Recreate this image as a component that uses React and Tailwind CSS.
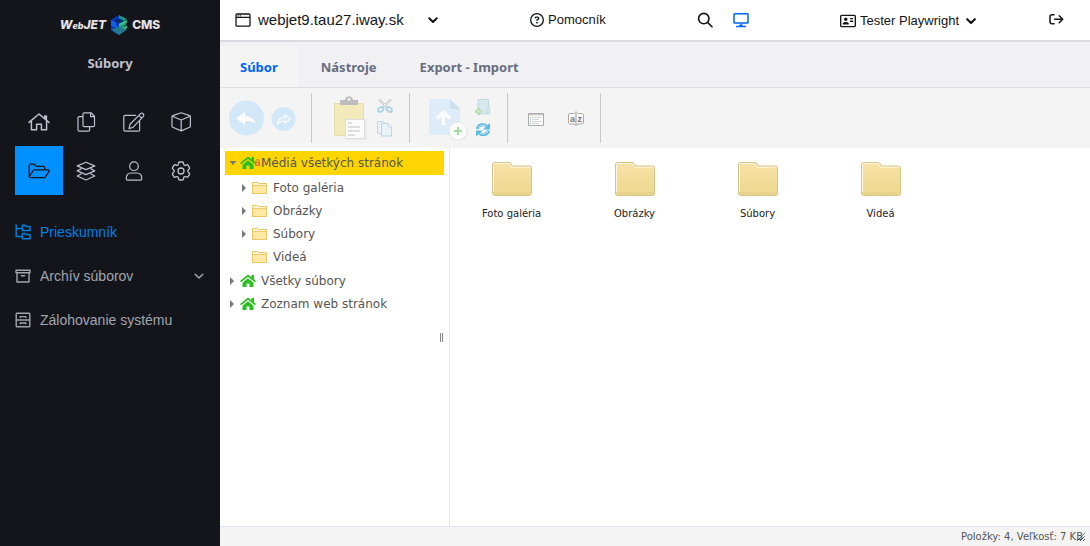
import React from "react";
import { FaRegCircleQuestion, FaRegAddressCard } from "react-icons/fa6";
import { HiOutlineCog6Tooth } from "react-icons/hi2";

function Line({ children, className = "", size = 24, width = 1.2 }) {
  return (
    <svg
      aria-hidden="true"
      className={"shrink-0 " + className}
      width={size}
      height={size}
      viewBox={`0 0 ${size} ${size}`}
      fill="none"
      stroke="currentColor"
      strokeWidth={width}
      strokeLinecap="round"
      strokeLinejoin="round"
    >
      {children}
    </svg>
  );
}

const sections = [
  {
    label: "Úvod",
    icon: (
      <Line width={1.5}>
        <path d="M2 12.4 12 4l10 8.4M4.4 11v8.8h5.2v-5.6h4.8v5.6h5.2V11M17.8 8.6V6h1.6v4" />
      </Line>
    ),
  },
  {
    label: "Web stránky",
    icon: (
      <Line>
        <path d="M17 2.8h-6.8c-.8 0-1.2.5-1.2 1.2v11.4c0 .8.4 1.2 1.2 1.2h9.1c.7 0 1.2-.4 1.2-1.2V6.2zM16.6 3v3.6h3.7M8.800 6.600H5.200C4.400 6.600 4 7 4 7.800V20c0 .8.4 1.200 1.200 1.200h9.200c.8 0 1.200-.4 1.200-1.200v-3.200" />
      </Line>
    ),
  },
  {
    label: "Šablóny",
    icon: (
      <Line>
        <path d="M13.6 5.4H3c-.8 0-1.2.4-1.2 1.2V20c0 .8.4 1.2 1.2 1.2h13.4c.8 0 1.2-.4 1.2-1.2v-8.6M7 18.6l1.2-4.6L18.6 3.6c1.6-1.4 4.2 1 2.8 2.8L11.2 17.2zM16.8 5.4l2.8 2.8" />
      </Line>
    ),
  },
  {
    label: "Aplikácie",
    icon: (
      <Line>
        <path d="M12.2 2.8 3.8 5.6c-.5.2-.8.5-.8 1v9.6c0 .5.3.9.8 1.1l8.4 3.6 8.4-3.6c.5-.2.8-.6.8-1.1V6.6c0-.5-.3-.8-.8-1zM3.3 6.2l8.9 3.8 8.9-3.8M12.2 10v10.8" />
      </Line>
    ),
  },
  {
    label: "Súbory",
    active: true,
    icon: (
      <Line width={1.3}>
        <path d="M2.2 17.6V6.4c0-.8.4-1.2 1.2-1.2h3.8l2.6 2.2h6.6c.8 0 1.2.4 1.2 1.2v2.2M2.2 17.6l4-6c.4-.5.7-.7 1.3-.7h13.8c.8 0 1.2.5.8 1.2l-3.400 5.500c-.4.7-.8 1-1.500 1H3.200c-.6 0-1-.4-1-1z" />
      </Line>
    ),
  },
  {
    label: "Formuláre",
    icon: (
      <Line>
        <path d="M12 3.200 3.200 6.900 12 10.600l8.800-3.700zM7 9.900l-3.800 2L12 15.600l8.800-3.700-3.800-2M7 15l-3.800 2 8.800 4 8.800-4-3.800-2" />
      </Line>
    ),
  },
  {
    label: "Používatelia",
    icon: (
      <Line>
        <circle cx="12" cy="7.200" r="4.300" />
        <path d="M4.200 19.800c0-3.900 2-5.800 5-5.800h5.600c3 0 5 1.900 5 5.800 0 .9-.5 1.400-1.300 1.400h-13c-.8 0-1.300-.5-1.300-1.400z" />
      </Line>
    ),
  },
  {
    label: "Nastavenia",
    icon: <HiOutlineCog6Tooth className="size-6 [stroke-width:1.3]" aria-hidden="true" />,
  },
];

const menu = [
  {
    label: "Prieskumník",
    active: true,
    icon: (
      <Line size={16} width={1.5}>
        <path d="M1.200 1v11.400h5.600M1.200 4.400h6M7.400 1.200h2.600l1 1.200h4v4.200H7.400zM7.400 9.400h2.600l1 1.200h4v4.200H7.400z" />
      </Line>
    ),
  },
  {
    label: "Archív súborov",
    expandable: true,
    icon: (
      <Line size={16} width={1.4}>
        <path d="M1 2.200h14v2.600H1zM2 5v9h12V5M6.400 7.800h3.200" />
      </Line>
    ),
  },
  {
    label: "Zálohovanie systému",
    icon: (
      <Line size={16} width={1.4}>
        <path d="M2 1.200h12c.5 0 .8.300.8.800v12c0 .5-.3.800-.8.800H2c-.5 0-.8-.3-.8-.8V2c0-.5.300-.8.800-.8zM1.400 8h13.200M5.200 5.400V4.600h5.600v.8M5.200 11.800V11h5.600v.8" />
      </Line>
    ),
  },
];

function Chevron({ className = "", width = 2 }) {
  return (
    <Line size={12} width={width} className={className}>
      <path d="m2.200 4.200 3.800 3.800 3.800-3.800" />
    </Line>
  );
}

function Logo() {
  return (
    <a
      href="#home"
      aria-label="WebJET CMS"
      className="flex h-5 items-center justify-center gap-1 font-['Inter',sans-serif] text-xs leading-5 text-[#e4e4e6]"
    >
      <span className="font-extrabold italic">
        W<span className="text-[9px]">eb</span>JET
      </span>
      <svg width="18" height="20" viewBox="0 0 18 20" aria-hidden="true">
        <path d="M9 0 1 4.500v11L9 20z" fill="#0836b8" />
        <path d="m9 0 8 4-3 2.500L17 9l-3 2.500 3 2.500-8 6z" fill="#1c9678" />
        <path d="m1 5 8 3.500L14 6 9 3.500 4 6z" fill="#052a75" />
        <path d="m1 5 5 2.400v3L9 12v2l-8-3.500z" fill="#0b62f0" />
        <path d="m9 9 8-4v2.500l-8 4zM9 14.500l8-4V13l-8 4z" fill="#35c08d" />
        <path d="m1 14.500 8-3 8 3L9 20z" fill="#20798c" />
      </svg>
      <span className="font-extrabold">CMS</span>
    </a>
  );
}

function Sidebar() {
  return (
    <aside className="w-[220px] shrink-0 bg-[#13151b] px-[15px] pt-[15px] text-[#bfc1cf]">
      <Logo />
      <h1 className="mt-4 text-center font-['Noto_Sans',sans-serif] text-[13px] leading-6 font-bold">
        Súbory
      </h1>
      <nav aria-label="Sekcie" className="mt-[22px] grid grid-cols-4">
        {sections.map((s) => (
          <a
            key={s.label}
            href="#section"
            aria-label={s.label}
            className={
              "flex h-[49px] items-center justify-center " +
              (s.active ? "bg-[#0090ff] text-[#13151b]" : "")
            }
          >
            {s.icon}
          </a>
        ))}
      </nav>
      <nav aria-label="Menu" className="mt-[15px] text-sm">
        {menu.map((m) => (
          <a
            key={m.label}
            href="#menu"
            className={
              "flex h-11 items-center gap-[9px] " +
              (m.active ? "text-[#0080e0]" : "text-[#a3a5ae]")
            }
          >
            {m.icon}
            <span className="grow">{m.label}</span>
            {m.expandable && <Chevron width={1.5} />}
          </a>
        ))}
      </nav>
    </aside>
  );
}

function Header() {
  return (
    <header className="flex h-[42px] items-center border-b-2 border-[#dcdce2] bg-white pr-[26px] pl-[15px] text-[#13151b]">
      <Line size={16} width={1.3}>
        <path d="M2 2h12c.6 0 1 .4 1 1v10.200c0 .6-.4 1-1 1H2c-.6 0-1-.4-1-1V3c0-.6.400-1 1-1zM1 5.400h14" />
        <path d="M3 3.800h.2M5.200 3.800h.2" />
      </Line>
      <select
        aria-label="Doména"
        defaultValue="webjet9.tau27.iway.sk"
        className="ml-[7px] h-8 w-[184px] appearance-none bg-transparent text-[15px] leading-6"
      >
        <option>webjet9.tau27.iway.sk</option>
      </select>
      <Chevron className="pointer-events-none -ml-[15px]" />
      <a href="#help" className="ml-[91px] flex items-center gap-1 text-[13px]">
        <FaRegCircleQuestion className="size-3.5" aria-hidden="true" />
        Pomocník
      </a>
      <button type="button" aria-label="Hľadať" className="ml-auto">
        <Line size={16} width={1.6}>
          <circle cx="6.800" cy="6.600" r="5.200" />
          <path d="m10.800 10.600 4.200 4.200" />
        </Line>
      </button>
      <a href="#web" aria-label="Zobraziť web" className="ml-5 text-[#0063fb]">
        <Line size={16} width={1.5}>
          <path d="M1.600 1.800h12.800c.3 0 .6.300.6.600v8c0 .3-.3.600-.6.600H1.600c-.3 0-.6-.3-.6-.6v-8c0-.3.300-.6.600-.6zM3.600 14.400h8.800M8 12.800v.6M7 13.200h2" />
        </Line>
      </a>
      <button type="button" className="ml-[91px] flex items-center gap-1 pt-0.5 text-[13px]">
        <FaRegAddressCard className="size-4" aria-hidden="true" />
        <span>Tester Playwright</span>
        <Chevron className="ml-0.5" width={2.2} />
      </button>
      <a href="#logout" aria-label="Odhlásiť" className="ml-[71px]">
        <Line size={16} width={1.5}>
          <path d="M6 2.800H4c-1.400 0-2 .7-2 2v5c0 1.400.6 2 2 2h2M6.600 7.300h8M11.200 3.800l3.500 3.500-3.500 3.500" />
        </Line>
      </a>
    </header>
  );
}

function Tabs() {
  return (
    <nav
      aria-label="Karty"
      className="flex h-[46px] items-end border-b border-[#dcdce2] bg-[#f1f1f4] font-['Noto_Sans',sans-serif] text-[13px] font-bold text-[#686d80]"
    >
      <button type="button" className="h-[41px] bg-[#f4f4f4] px-5 pt-0.5 text-[#0063fb]">
        Súbor
      </button>
      <button type="button" className="h-[41px] px-[23px] pt-0.5">
        Nástroje
      </button>
      <button type="button" className="h-[41px] px-5 pt-0.5">
        Export - Import
      </button>
    </nav>
  );
}

function Tool({ label, children, className = "" }) {
  return (
    <button type="button" aria-label={label} className={"shrink-0 " + className}>
      {children}
    </button>
  );
}

function Divider() {
  return <div className="h-[50px] w-px shrink-0 bg-[#c8c8c8]" />;
}

function Toolbar() {
  return (
    <div role="toolbar" className="flex h-[60px] items-center bg-[#f4f4f4]">
      <div className="flex w-[91px] shrink-0 items-center gap-[7px] pl-[9px]">
        <Tool label="Späť">
          <svg width="35" height="36" viewBox="0 0 35 36">
            <circle cx="17.500" cy="18" r="17.500" fill="#d2e7f7" />
            <path d="m7 18.500 9-6.500v4c6 .2 9.400 3 11 8.500-3-3-6-3.600-11-3.400v4z" fill="#fbfbfb" />
          </svg>
        </Tool>
        <Tool label="Dopredu">
          <svg width="25" height="26" viewBox="0 0 25 26">
            <circle cx="12.500" cy="14" r="12" fill="#d2e7f7" />
            <path
              d="m19.500 14-5.500-4v2.300C9.500 12.500 7 14.500 6.500 18.500c2.500-2.400 4.500-2.800 7.500-2.700V18z"
              fill="none"
              stroke="#fbfbfb"
              strokeWidth="1.300"
              strokeLinejoin="round"
            />
          </svg>
        </Tool>
      </div>
      <Divider />
      <div className="flex w-[97px] shrink-0 items-center gap-[9px] pl-[22px]">
        <Tool label="Prilepiť">
          <svg width="34" height="46" viewBox="0 0 34 46">
            <path d="M.5 8.500h29v32H.5z" fill="#f3eabb" stroke="#e9dfae" />
            <path d="M6 5h5c.4-5 7.600-5 8 0h5v5H6z" fill="#bdbdbd" />
            <circle cx="15" cy="4.500" r="1.400" fill="#f4f4f4" />
            <path d="M13 26h20v19H13z" fill="#ebebeb" />
            <path d="M11.500 24.500h19v19h-19z" fill="#fbfbfb" stroke="#dedede" />
            <path d="M14 28h4M14 32h12M14 36h12M14 40h7" stroke="#dedede" strokeWidth="2" />
          </svg>
        </Tool>
        <div className="flex flex-col gap-[7px]">
          <Tool label="Vystrihnúť">
            <svg width="16" height="16" viewBox="0 0 16 16" fill="none">
              <path d="M2 1.500 11 10M14 1.500 5 10" stroke="#c3c7ca" strokeWidth="2.400" />
              <path d="m2.500 2 8 7.500M13.500 2l-8 7.500" stroke="#f7f7f7" strokeWidth=".8" />
              <ellipse cx="3.800" cy="11.500" rx="3" ry="2" transform="rotate(-35 3.800 11.500)" stroke="#abd2e4" strokeWidth="1.800" />
              <ellipse cx="12.200" cy="11.500" rx="3" ry="2" transform="rotate(35 12.200 11.500)" stroke="#abd2e4" strokeWidth="1.800" />
            </svg>
          </Tool>
          <Tool label="Kopírovať">
            <svg width="16" height="17" viewBox="0 0 16 17" fill="#eaf3f8" stroke="#bdd6e4">
              <path d="M.5.500h5.500L8.500 3v9.500h-8z" />
              <path d="M4.500 2.500h6.500L14.500 5.500v9.500h-10z" />
              <path d="M11 2.500v3.500h3.500" fill="#fff" />
            </svg>
          </Tool>
        </div>
      </div>
      <Divider />
      <div className="flex w-[97px] shrink-0 items-center gap-[5px] pl-[18px]">
        <Tool label="Nahrať súbory">
          <svg width="42" height="46" viewBox="0 0 42 46">
            <path d="M1 4h21l10 10v26H1z" fill="#deebf8" />
            <path d="M22 4v10h10z" fill="#cbe0f1" />
            <path d="M15.500 30V17M9 23.500l6.500-6.500 6.500 6.500" fill="none" stroke="#fbfbfb" strokeWidth="3.400" />
            <circle cx="31" cy="37" r="9" fill="#eaeaea" />
            <circle cx="30" cy="36" r="9" fill="#fcfcfc" stroke="#e6e6e6" />
            <path d="M30 32v8M26 36h8" stroke="#a6d9a9" strokeWidth="2" />
          </svg>
        </Tool>
        <div className="flex flex-col gap-[7px]">
          <Tool label="Nový priečinok">
            <svg width="16" height="16" viewBox="0 0 16 16">
              <path d="M3 .5h10.500v6L14.500 8v7H3z" fill="#d8e9ee" stroke="#bfd8de" />
              <path d="M12 15V9l2-2" fill="none" stroke="#bfd8de" />
              <path d="M3.500 9v7M0 12.500h7" stroke="#a9d79e" strokeWidth="2.400" />
              <path d="M3.500 10v5M1 12.500h5" stroke="#d9f0d1" strokeWidth=".8" />
            </svg>
          </Tool>
          <Tool label="Obnoviť">
            <svg width="16" height="16" viewBox="0 0 16 16" fill="none">
              <path d="M2.500 7C3 3 8 1.300 11.500 4M13.500 8.500C13 12.200 8 14 4.500 11.500" stroke="#55b1de" strokeWidth="3" />
              <path d="M15 1v6.500H8zM1 14.500V8.500h7z" fill="#5eb9e4" />
              <path d="M3 6.500C4 3.600 8 2 11 4.200M13 9C12 12 8 13.300 5 11.200" stroke="#b5e2f6" strokeWidth="1.200" />
            </svg>
          </Tool>
        </div>
      </div>
      <Divider />
      <div className="flex w-[92px] shrink-0 items-center justify-between pr-4 pl-5">
        <Tool label="Zobrazenie">
          <svg width="16" height="16" viewBox="0 0 16 16">
            <path d="M.5 3.500h15v12H.5z" fill="#fafafa" stroke="#aaa" />
            <path d="M1 4.500h14" stroke="#c2c2c2" strokeWidth="1.500" />
            <path d="M4 7.500h9M4 9.500h7M4 11.500h9M4 13.500h7" stroke="#ccc" strokeWidth=".8" />
            <path d="M2 7.500h1M2 11.500h1" stroke="#9fd0a2" />
            <path d="M2 9.500h1M2 13.500h1" stroke="#a5c6e0" />
          </svg>
        </Tool>
        <Tool label="Zoradiť">
          <svg width="16" height="18" viewBox="0 0 16 18">
            <path
              d="M2 4.500h4L8 2.500l2 2h4c1 0 1.500.5 1.500 1.500v7.500c0 1-.5 1.500-1.500 1.500h-4l-2 1.500L6 15H2c-1 0-1.500-.5-1.500-1.500V6c0-1 .5-1.500 1.500-1.500z"
              fill="#f8f8f8"
              stroke="#aaa"
            />
            <path d="M8 4v12" stroke="#999" />
            <text x="2" y="12.500" fontSize="9" fontWeight="700" fill="#777" fontFamily="Liberation Sans">a</text>
            <text x="9.500" y="12.500" fontSize="9" fontWeight="700" fill="#777" fontFamily="Liberation Sans">z</text>
          </svg>
        </Tool>
      </div>
      <Divider />
    </div>
  );
}

function HomeIcon() {
  return (
    <svg width="16" height="14" viewBox="0 0 16 14" fill="#2bbf20" className="shrink-0" aria-hidden="true">
      <path d="M8 .5 0 7l1.200 1.300L8 2.800l6.800 5.500L16 7l-2-1.700V1h-2.500v2.300z" />
      <path d="m8 4.200-5.500 4.500V13H6.500V9.500h3V13h4V8.700z" />
    </svg>
  );
}

function SmallFolder() {
  return (
    <svg width="15" height="12" viewBox="0 0 15 12" className="shrink-0" aria-hidden="true">
      <path d="M.5 11.500V.5h5l1 1h8v10z" fill="#fff6d8" stroke="#efc562" />
      <path d="M1 4h13v7H1z" fill="#ffe9a4" />
      <path d="M1 3.500h13" stroke="#f1cb6f" />
    </svg>
  );
}

function Arrow({ open }) {
  return (
    <svg width="8" height="8" viewBox="0 0 8 8" fill="#777" className="shrink-0" aria-hidden="true">
      {open ? <path d="M.5 2h7L4 6z" /> : <path d="M2 0v8l4-4z" />}
    </svg>
  );
}

function Tree() {
  const folders = ["Foto galéria", "Obrázky", "Súbory", "Videá"];
  return (
    <div className="flex w-[230px] shrink-0 flex-col border-r border-[#dfe8f3] p-[5px] pt-[3px] font-['DejaVu_Sans',sans-serif] text-xs text-[#555]">
      <ul role="tree">
        <li role="treeitem" aria-expanded="true" aria-selected="true">
          <div className="relative flex h-6 items-center bg-[#ffd500] pl-1">
            <Arrow open />
            <span className="ml-[3px] flex">
              <HomeIcon />
            </span>
            <svg className="absolute top-2 left-[30px]" width="5" height="7" viewBox="0 0 5 7" aria-hidden="true">
              <path d="M1 3V1.800C1 .2 4 .2 4 1.800V3" fill="none" stroke="#d36c29" />
              <path d="M0 3h5v4H0z" fill="#ee7623" />
              <path d="M1.500 5h2" stroke="#ffd8a8" />
            </svg>
            <span className="ml-[5px]">Médiá všetkých stránok</span>
          </div>
          <ul role="group" className="py-px">
            {folders.map((name, i) => (
              <li key={name} role="treeitem" className="flex h-[23px] items-center pl-[15px]">
                {i < 3 ? <Arrow /> : <span className="w-2" />}
                <span className="mr-1.5 ml-1">
                  <SmallFolder />
                </span>
                {name}
              </li>
            ))}
          </ul>
        </li>
        {["Všetky súbory", "Zoznam web stránok"].map((name) => (
          <li key={name} role="treeitem" className="flex h-[23px] items-center pl-[3px]">
            <Arrow />
            <span className="mr-[5px] ml-1">
              <HomeIcon />
            </span>
            {name}
          </li>
        ))}
      </ul>
      <div className="mt-[18px] flex gap-px self-end pr-px">
        <span className="h-[9px] w-px bg-[#888]" />
        <span className="h-[9px] w-px bg-[#888]" />
      </div>
    </div>
  );
}

function FolderTile({ name }) {
  return (
    <button
      type="button"
      className="flex w-[123px] flex-col items-center gap-2.5 text-[10px] leading-[14px] text-[#222]"
    >
      <svg width="40" height="35" viewBox="0 0 40 35" aria-hidden="true">
        <defs>
          <linearGradient id="folder" x1="0" y1="0" x2="0" y2="1">
            <stop offset="0" stopColor="#f8e2a8" />
            <stop offset="1" stopColor="#ecd88d" />
          </linearGradient>
        </defs>
        <path
          d="M.5 31V3c0-1.500.5-2.500 2-2.500h14.500c1 0 1.500.3 2 1.200L20.500 4H37.500c1.500 0 2 .8 2 2V31c0 1.500-.7 2.500-2 2.500h-35c-1.300 0-2-1-2-2.500z"
          fill="url(#folder)"
          stroke="#d5c389"
        />
        <path d="M1.500 30V3c0-1 .4-1.500 1.300-1.500h14l2.700 3.800h18c.6 0 1 .4 1 1" fill="none" stroke="#fff7df" />
        <path d="M2 31h36" stroke="#dfcc8a" />
      </svg>
      {name}
    </button>
  );
}

export default function App() {
  return (
    <div className="flex min-h-screen bg-white font-['Liberation_Sans',Arial,sans-serif]">
      <Sidebar />
      <div className="flex min-w-0 grow flex-col">
        <Header />
        <Tabs />
        <Toolbar />
        <main className="flex grow">
          <Tree />
          <div className="flex grow flex-wrap content-start pt-3.5 font-['DejaVu_Sans',sans-serif]">
            {["Foto galéria", "Obrázky", "Súbory", "Videá"].map((name) => (
              <FolderTile key={name} name={name} />
            ))}
          </div>
        </main>
        <footer className="flex h-5 items-center justify-end border-t border-[#dfe8f6] bg-[#f4f4f4] pr-[5px] font-['DejaVu_Sans',sans-serif] text-[10px] text-[#555]">
          <span>Položky: 4, Veľkosť: 7 KB</span>
          <svg className="-ml-1.5" width="8" height="8" viewBox="0 0 8 8" stroke="#111" strokeDasharray="1 .6" aria-hidden="true">
            <path d="M0 8 8 0M3 8l5-5M6 8l2-2" />
          </svg>
        </footer>
      </div>
    </div>
  );
}
